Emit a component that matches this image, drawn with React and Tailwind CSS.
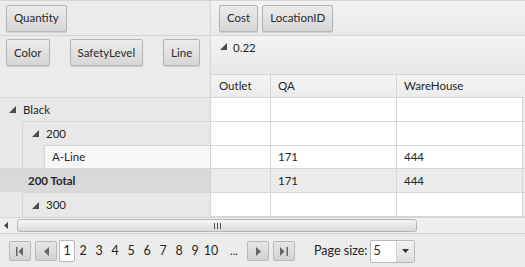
import React from "react";

const line = "border-[#d5d5d5]";

function Tri() {
  return (
    <svg width="7" height="7" viewBox="0 0 7 7" className="shrink-0">
      <polygon points="7,0 7,7 0,7" fill="#4a4a4a" />
    </svg>
  );
}

function FieldBtn({ children }) {
  return (
    <div className="flex h-[27px] items-center rounded-[2px] border border-[#b4b4b4] bg-gradient-to-b from-[#ececec] to-[#d6d6d6] px-[7px] text-[#2a2a2a] shadow-[0_1px_1px_rgba(0,0,0,0.12)]">
      {children}
    </div>
  );
}

function PagerBtn({ children }) {
  return (
    <div className="flex h-[20px] w-[22px] items-center justify-center rounded-[2px] border border-[#b9b9b9] bg-gradient-to-b from-[#e6e6e6] to-[#d2d2d2]">
      {children}
    </div>
  );
}

function ValueCells({ total, a, b }) {
  return (
    <div className={`flex h-[24px] border-b ${line} ${total ? "bg-[#ebebeb]" : "bg-white"}`}>
      <div className={`w-[60px] border-r ${line}`} />
      <div className={`flex w-[126px] items-center border-r ${line} pl-[7px]`}>{a}</div>
      <div className={`flex w-[126px] items-center border-r ${line} pl-[7px]`}>{b}</div>
      <div className="flex-1 bg-[#ececec]" />
    </div>
  );
}

export default function App() {
  const pages = ["1", "2", "3", "4", "5", "6", "7", "8", "9", "10"];

  return (
    <div className="h-[267px] w-[525px] overflow-hidden bg-[#ebebeb] font-['Lato',sans-serif] text-[11.5px] text-[#262626]">
      {/* filas de campos */}
      <div className={`flex h-[36px] border-y ${line}`}>
        <div className={`flex w-[211px] items-center border-r ${line} pl-[6px]`}>
          <FieldBtn>Quantity</FieldBtn>
        </div>
        <div className="flex flex-1 items-center gap-[4px] bg-gradient-to-b from-[#f3f3f3] to-[#e9e9e9] pl-[8px]">
          <FieldBtn>Cost</FieldBtn>
          <FieldBtn>LocationID</FieldBtn>
        </div>
      </div>

      <div className={`flex h-[62px] border-b ${line}`}>
        <div className={`flex w-[211px] items-start gap-[20px] border-r ${line} pl-[6px] pt-[3px]`}>
          <FieldBtn>Color</FieldBtn>
          <FieldBtn>SafetyLevel</FieldBtn>
          <FieldBtn>Line</FieldBtn>
        </div>
        <div className="flex flex-1 flex-col">
          <div className={`flex h-[39px] items-start gap-[6px] border-b ${line} bg-gradient-to-b from-[#f4f4f4] to-[#e8e8e8] pl-[9px] pt-[3px]`}>
            <div className="pt-[4px]"><Tri /></div>
            <span>0.22</span>
          </div>
          <div className="flex flex-1 bg-gradient-to-b from-[#f4f4f4] to-[#ececec]">
            <div className={`flex w-[60px] items-center border-r ${line} pl-[8px]`}>Outlet</div>
            <div className={`flex w-[126px] items-center border-r ${line} pl-[7px]`}>QA</div>
            <div className="flex w-[126px] items-center pl-[7px]">WareHouse</div>
          </div>
        </div>
      </div>

      {/* cuerpo */}
      <div className="flex h-[119px]">
        <div className={`w-[211px] border-r ${line} bg-[#e8e8e8]`}>
          <div className="flex h-[23px] items-center gap-[7px] pl-[9px]">
            <Tri />
            <span>Black</span>
          </div>
          <div className="flex h-[24px]">
            <div className="w-[22px]" />
            <div className={`flex flex-1 items-center gap-[7px] border-l border-t ${line} pl-[9px]`}>
              <Tri />
              <span>200</span>
            </div>
          </div>
          <div className="flex h-[23px]">
            <div className="w-[22px]" />
            <div className={`w-[22px] border-l ${line}`} />
            <div className={`flex flex-1 items-center border-l border-t ${line} bg-[#f8f8f8] pl-[7px]`}>A-Line</div>
          </div>
          <div className={`flex h-[24px] items-center border-t ${line} bg-[#d9d9d9] pl-[28px] font-bold`}>200 Total</div>
          <div className="flex h-[25px]">
            <div className="w-[22px]" />
            <div className={`flex flex-1 items-center gap-[7px] border-l border-t ${line} pl-[9px]`}>
              <Tri />
              <span>300</span>
            </div>
          </div>
        </div>
        <div className="flex flex-1 flex-col">
          <ValueCells />
          <ValueCells />
          <ValueCells a="171" b="444" />
          <ValueCells total a="171" b="444" />
          <ValueCells />
        </div>
      </div>

      {/* barra de desplazamiento */}
      <div className={`flex h-[16px] items-center border-t ${line} bg-[#efefef]`}>
        <svg width="4" height="7" viewBox="0 0 4 7" className="ml-[4px]">
          <polygon points="4,0 4,7 0,3.5" fill="#444" />
        </svg>
        <div className="ml-[9px] flex h-[13px] w-[400px] items-center justify-center rounded-[3px] border border-[#b5b5b5] bg-gradient-to-b from-[#f7f7f7] to-[#d9d9d9]">
          <div className="flex gap-[2px]">
            <div className="h-[6px] w-px bg-[#555]" />
            <div className="h-[6px] w-px bg-[#555]" />
            <div className="h-[6px] w-px bg-[#555]" />
          </div>
        </div>
      </div>

      {/* paginador */}
      <div className={`flex h-[35px] items-center border-t ${line} bg-[#ececec] pl-[9px]`}>
        <div className="flex items-center gap-[4px]">
          <PagerBtn>
            <svg width="8" height="9" viewBox="0 0 8 9">
              <rect x="0" y="0" width="1.5" height="9" fill="#666" />
              <polygon points="7,0 7,9 2.5,4.5" fill="#666" />
            </svg>
          </PagerBtn>
          <PagerBtn>
            <svg width="5" height="9" viewBox="0 0 5 9">
              <polygon points="5,0 5,9 0,4.5" fill="#666" />
            </svg>
          </PagerBtn>
        </div>
        <div className="ml-[2px] flex items-center text-[12.5px]">
          {pages.map((p, i) => (
            <div
              key={p}
              className={
                i === 0
                  ? "flex h-[22px] w-[16px] items-center justify-center rounded-[2px] border border-[#b9b9b9] bg-white"
                  : "flex h-[22px] w-[16px] items-center justify-center"
              }
            >
              {p}
            </div>
          ))}
          <div className="flex h-[22px] w-[24px] items-center justify-center pl-[6px] text-[11px]">...</div>
        </div>
        <div className="ml-[4px] flex items-center gap-[4px]">
          <PagerBtn>
            <svg width="5" height="9" viewBox="0 0 5 9">
              <polygon points="0,0 0,9 5,4.5" fill="#666" />
            </svg>
          </PagerBtn>
          <PagerBtn>
            <svg width="8" height="9" viewBox="0 0 8 9">
              <polygon points="0,0 0,9 4.5,4.5" fill="#666" />
              <rect x="6.5" y="0" width="1.5" height="9" fill="#666" />
            </svg>
          </PagerBtn>
        </div>
        <span className="ml-[19px] text-[12.5px]">Page size:</span>
        <div className="ml-[3px] flex h-[23px] w-[45px] rounded-[2px] border border-[#b9b9b9] bg-white">
          <div className="flex flex-1 items-center pl-[2px] text-[12.5px]">5</div>
          <div className={`flex w-[18px] items-center justify-center border-l ${line} bg-gradient-to-b from-[#f2f2f2] to-[#dedede]`}>
            <svg width="7" height="4" viewBox="0 0 7 4">
              <polygon points="0,0 7,0 3.5,4" fill="#333" />
            </svg>
          </div>
        </div>
      </div>
    </div>
  );
}
